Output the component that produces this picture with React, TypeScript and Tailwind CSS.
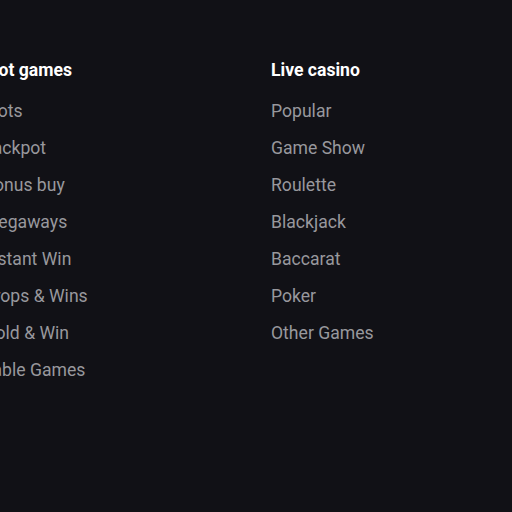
const columns = [
  {
    title: "Slot games",
    links: [
      "Slots",
      "Jackpot",
      "Bonus buy",
      "Megaways",
      "Instant Win",
      "Drops & Wins",
      "Hold & Win",
      "Table Games",
    ],
  },
  {
    title: "Live casino",
    links: [
      "Popular",
      "Game Show",
      "Roulette",
      "Blackjack",
      "Baccarat",
      "Poker",
      "Other Games",
    ],
  },
];

export default function App() {
  return (
    <div className="h-[512px] w-[512px] overflow-hidden bg-[#111116] font-['Roboto',sans-serif]">
      <div className="ml-[-17px] flex pt-[58px]">
        {columns.map((col) => (
          <div key={col.title} className="w-[288px] shrink-0">
            <h3 className="mb-[17px] text-[17.6px] leading-6 font-bold text-white">
              {col.title}
            </h3>
            <ul className="flex flex-col gap-[13px] text-[17.6px] leading-6">
              {col.links.map((link) => (
                <li key={link}>
                  <a href="#" className="text-[#98989d]">
                    {link}
                  </a>
                </li>
              ))}
            </ul>
          </div>
        ))}
      </div>
    </div>
  );
}
